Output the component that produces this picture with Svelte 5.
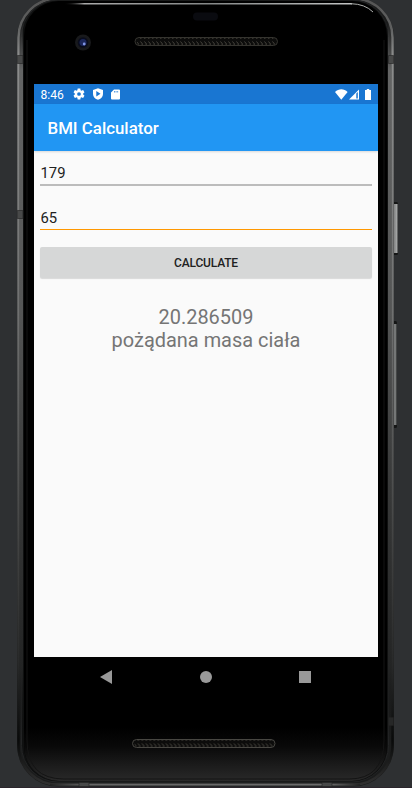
<script>
  let height = $state('179');
  let weight = $state('65');
  let bmi = $state('20.286509');
  let verdict = $state('pożądana masa ciała');

  function calculate() {
    const value = Number(weight) / (Number(height) / 100) ** 2;
    bmi = value.toFixed(6);
    verdict = value < 18.5 ? 'niedowaga' : value < 25 ? 'pożądana masa ciała' : 'nadwaga';
  }
</script>

<div class="stage">
  <svg class="device" width="412" height="788" viewBox="0 0 412 788" aria-hidden="true">
    <defs>
      <linearGradient id="rail" x1="0" y1="0" x2="0" y2="788" gradientUnits="userSpaceOnUse">
        <stop offset="0" stop-color="#555" />
        <stop offset=".035" stop-color="#606161" />
        <stop offset=".07" stop-color="#8c8d8d" />
        <stop offset=".15" stop-color="#868787" />
        <stop offset=".4" stop-color="#6f7070" />
        <stop offset=".6" stop-color="#505151" />
        <stop offset=".84" stop-color="#292a2a" />
        <stop offset=".94" stop-color="#090a0a" />
        <stop offset="1" stop-color="#333" />
      </linearGradient>
      <linearGradient id="side" x1="0" y1="20" x2="0" y2="740" gradientUnits="userSpaceOnUse">
        <stop offset="0" stop-color="#555" stop-opacity="0" />
        <stop offset=".07" stop-color="#646565" />
        <stop offset=".4" stop-color="#555656" />
        <stop offset=".65" stop-color="#383939" />
        <stop offset=".9" stop-color="#232424" />
        <stop offset="1" stop-color="#111" stop-opacity="0" />
      </linearGradient>
      <linearGradient id="chin" x1="0" y1="0" x2="0" y2="1">
        <stop offset="0" stop-color="#000" />
        <stop offset=".35" stop-color="#090909" />
        <stop offset=".72" stop-color="#1c1c1c" />
        <stop offset="1" stop-color="#292929" />
      </linearGradient>
      <linearGradient id="edge" x1="0" y1="0" x2="1" y2="0">
        <stop offset="0" stop-color="#000" stop-opacity="0" />
        <stop offset=".07" stop-color="#aaa" />
        <stop offset=".5" stop-color="#858888" />
        <stop offset="1" stop-color="#c2c4c4" />
      </linearGradient>
      <linearGradient id="foot" x1="0" y1="0" x2="1" y2="0">
        <stop offset="0" stop-color="#222" />
        <stop offset=".12" stop-color="#666" />
        <stop offset=".9" stop-color="#6c6c6c" />
        <stop offset="1" stop-color="#222" />
      </linearGradient>
      <linearGradient id="key" x1="0" y1="0" x2="1" y2="0">
        <stop offset="0" stop-color="#777" />
        <stop offset=".65" stop-color="#979999" />
        <stop offset="1" stop-color="#b2b4b4" />
      </linearGradient>
      <pattern id="mesh" width="4" height="8" patternUnits="userSpaceOnUse">
        <path d="M.5 1.5 2.5 4 .5 7" fill="none" stroke="#45423b" stroke-width="1" />
      </pattern>
      <clipPath id="glass"><rect x="24" y="1" width="363" height="780" rx="35" /></clipPath>
    </defs>
    <rect width="412" height="788" fill="#2e3032" />
    <rect y="787" width="412" height="1" fill="#2b252c" />
    <rect x="391" y="202" width="7" height="53" rx="1.5" fill="#151616" />
    <rect x="393" y="204" width="4.5" height="49" fill="url(#key)" />
    <rect x="391" y="321" width="6" height="107" rx="1.5" fill="#151616" />
    <rect x="393" y="324" width="3.5" height="101" fill="#757777" />
    <rect x="17" y="-3" width="377" height="789.5" rx="41" fill="#1b1c1c" />
    <rect x="18.5" y="-1.5" width="374" height="786" rx="39" fill="none" stroke="url(#rail)" stroke-width="2.5" />
    <rect x="21.5" y="0" width="367" height="782" rx="36.5" fill="#101111" stroke="#232425" />
    <rect x="19.5" y="20" width="3.5" height="720" fill="url(#side)" />
    <rect x="388" y="20" width="3.5" height="720" fill="url(#side)" />
    <rect x="24" y="1" width="363" height="780" rx="35" />
    <g clip-path="url(#glass)">
      <rect x="24" y="728" width="363" height="53" fill="url(#chin)" />
      <path d="M27 40V740Q27 779 64 779H349Q384 779 384 740V40" fill="none" stroke="#151515" />
    </g>
    <rect x="64" y="3" width="288" height="1.5" fill="url(#edge)" />
    <path d="M351 3.7Q365 4 373 12" fill="none" stroke="#aeb0ae" />
    <rect x="50" y="783.7" width="310" height="1.8" fill="url(#foot)" />
    <g fill="#484949" stroke="#222" stroke-width=".6">
      <path d="M17.3 55.5h5.5v8h-5.5zM17.3 210.5h5.5v8h-5.5zM388.5 55.5h5v8h-5zM79 782.5h10v4H79zM322 782.5h10v4h-10z" />
      <path d="M388.5 717.5h5v8h-5z" fill="#262727" />
    </g>
    <rect x="193" y="12.5" width="25" height="8" rx="4" fill="#0a0b10" />
    <circle cx="83" cy="42.5" r="8" fill="#18191b" />
    <circle cx="83" cy="42.5" r="5.3" fill="#090c1c" />
    <circle cx="83" cy="42.5" r="3.5" fill="#1b2659" />
    <circle cx="84.2" cy="44" r="1.4" fill="#8195e5" />
    <rect x="135" y="37.5" width="142.5" height="8" rx="4" fill="#0c0c0b" stroke="#35342f" />
    <rect x="137" y="38" width="139" height="7" rx="3" fill="url(#mesh)" />
    <rect x="132.5" y="739.5" width="142.5" height="8" rx="4" fill="#0c0c0b" stroke="#484742" />
    <g transform="translate(-2.5 702)"><rect x="137" y="38" width="139" height="7" rx="3" fill="url(#mesh)" /></g>
  </svg>

  <main class="screen">
    <div class="status">
      <span class="clock">8:46</span>
      <svg class="gear" width="12" height="12" viewBox="1.7 1.7 20.6 20.6"><path d="M19.14 12.94c.04-.3.06-.61.06-.94s-.02-.64-.07-.94l2.03-1.58c.18-.14.23-.41.12-.61l-1.92-3.32c-.12-.22-.37-.29-.59-.22l-2.39.96c-.5-.38-1.03-.7-1.62-.94L14.4 2.81c-.04-.24-.24-.41-.48-.41h-3.84c-.24 0-.43.17-.47.41l-.36 2.54c-.59.24-1.13.57-1.62.94l-2.39-.96c-.22-.08-.47 0-.59.22L2.74 8.87c-.12.21-.08.47.12.61l2.03 1.58c-.05.3-.09.63-.09.94s.02.64.07.94l-2.03 1.58c-.18.14-.23.41-.12.61l1.92 3.32c.12.22.37.29.59.22l2.39-.96c.5.38 1.03.7 1.62.94l.36 2.54c.05.24.24.41.48.41h3.84c.24 0 .44-.17.47-.41l.36-2.54c.59-.24 1.13-.56 1.62-.94l2.39.96c.22.08.47 0 .59-.22l1.92-3.32c.12-.22.07-.47-.12-.61zM12 15.2a3.2 3.2 0 1 1 0-6.4 3.2 3.2 0 0 1 0 6.4z" /></svg>
      <svg class="shield" width="10" height="12" viewBox="0 0 10 12"><path fill-rule="evenodd" d="M5 .2 0 2v4c0 3 2.2 5 5 5.8C7.8 11 10 9 10 6V2zM3.3 3 7.5 5.7 3.3 8.5z" /></svg>
      <svg class="card" width="9" height="11" viewBox="0 0 9 11"><path fill-rule="evenodd" d="M3 .5h5a1 1 0 0 1 1 1v8a1 1 0 0 1-1 1H1a1 1 0 0 1-1-1V3.5zM3 2v1.4h.7V2zm1.7 0v1.4h.7V2zm1.7 0v1.4h.7V2z" /></svg>
      <span class="spacer"></span>
      <svg width="13" height="11" viewBox="0 0 13 11"><path d="M6.3 10.7 0 3C3.6-.6 9-.6 12.6 3z" /></svg>
      <svg class="signal" width="10" height="11" viewBox="0 0 10 11"><path fill-rule="evenodd" d="M0 10.5 10 .5v10zM7.3 4.6v5h1.5V3.1z" /></svg>
      <svg class="battery" width="6" height="11" viewBox="0 0 6 11"><path d="M1.8 0h2.4v1H6v10H0V1h1.8z" /></svg>
    </div>
    <header>BMI Calculator</header>
    <div class="form">
      <input aria-label="Height" bind:value={height} />
      <input class="focused" aria-label="Weight" bind:value={weight} />
      <button onclick={calculate}>CALCULATE</button>
      <output><span>{bmi}</span><span>{verdict}</span></output>
    </div>
  </main>

  <nav>
    <svg width="12" height="14" viewBox="0 0 12 14"><path d="M0 7 12 0v14z" /></svg>
    <svg width="12" height="12" viewBox="0 0 12 12"><circle cx="6" cy="6" r="6" /></svg>
    <svg width="12" height="12" viewBox="0 0 12 12"><path d="M0 0h12v12H0z" /></svg>
  </nav>
</div>

<style>
  :global(body) { margin: 0; background: #2e3032; }
  .stage {
    position: relative;
    width: 412px;
    height: 788px;
    box-sizing: border-box;
    padding: 84px 34px 0;
    overflow: hidden;
    font-family: Roboto, sans-serif;
  }
  .device { position: absolute; top: 0; left: 0; }
  .screen {
    position: relative;
    width: 344px;
    height: 573px;
    background: #fafafa;
  }
  .status {
    height: 20px;
    display: flex;
    align-items: center;
    background: #1976d2;
    color: #fff;
    padding: 0 7px 0 6.5px;
  }
  .status svg { fill: #fff; flex: none; }
  .clock { width: 32px; font-size: 12.1px; line-height: 20px; padding-top: 1px; box-sizing: border-box; }
  .shield { margin-left: 8px; }
  .card { margin-left: 8.5px; }
  .spacer { flex: 1; }
  .signal { margin-left: 1px; }
  .battery { margin-left: 6px; }
  header {
    height: 47px;
    padding-left: 13.5px;
    background: #2196f3;
    color: #fff;
    font-size: 16.85px;
    font-weight: 500;
    line-height: 48px;
    box-shadow: 0 1px 2px #0002;
  }
  .form { display: flex; flex-direction: column; padding: 9px 6px 0; }
  input {
    height: 26px;
    box-sizing: border-box;
    border: 0;
    border-bottom: 2px solid #bcbcbc;
    padding: 2px 0 0 .5px;
    margin: 0 0 19px;
    outline: 0;
    border-radius: 0;
    background: none;
    color: #212121;
    font: 14.8px Roboto, sans-serif;
  }
  input.focused { border-bottom: 1px solid #ff9800; height: 25px; margin-bottom: 17px; }
  button {
    height: 31px;
    border: 0;
    border-radius: 2px;
    padding: 1px 0 0;
    background: #d6d7d7;
    color: #212121;
    font: 500 12px Roboto, sans-serif;
    letter-spacing: -.17px;
    box-shadow: 0 1px 1px #0002;
  }
  output {
    display: flex;
    flex-direction: column;
    align-items: center;
    margin-top: 28px;
    color: #757575;
    font-size: 19.95px;
    line-height: 23px;
  }
  nav {
    position: relative;
    height: 40px;
    display: flex;
    align-items: center;
    justify-content: space-between;
    padding: 0 67px 0 66px;
  }
  nav svg { fill: #999; }
</style>
